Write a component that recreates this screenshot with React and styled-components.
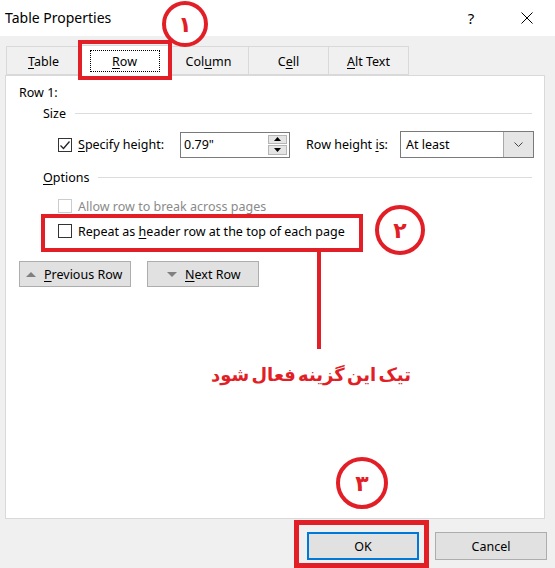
import React from "react";
import styled, { createGlobalStyle } from "styled-components";

const Global = createGlobalStyle`
  html, body { margin: 0; padding: 0; background: #f0f0f0; }
  body { font-family: "Segoe UI", "Noto Sans", "Open Sans", sans-serif; font-size: 12px; color: #000; }
  * { box-sizing: border-box; }
`;

const RED = "#e21f26";

const Window = styled.div`
  position: relative;
  width: 555px;
  height: 568px;
  display: flex;
  flex-direction: column;
  background: #f0f0f0;
  overflow: hidden;
`;

const TitleBar = styled.div`
  height: 36px;
  background: #fff;
  display: flex;
  align-items: center;
  padding-left: 5px;
  flex-shrink: 0;
`;

const Title = styled.div`
  font-size: 14px;
  flex: 1;
  padding-bottom: 2px;
`;

const TitleBtn = styled.div`
  width: 46px;
  height: 36px;
  display: flex;
  align-items: center;
  justify-content: center;
  font-size: 15px;
  margin-right: ${(p) => p.$mr || 0}px;
`;

const Main = styled.div`
  padding: 9px 10px 0 5px;
  display: flex;
  flex-direction: column;
`;

const TabStrip = styled.div`
  display: flex;
  align-items: flex-end;
  height: 30px;
  padding-left: 1px;
  position: relative;
  z-index: 1;
`;

const Tab = styled.div`
  width: ${(p) => p.$w}px;
  height: ${(p) => (p.$active ? 31 : 29)}px;
  border: 1px solid #d9d9d9;
  border-bottom: ${(p) => (p.$active ? "none" : "1px solid #d9d9d9")};
  margin-left: ${(p) => (p.$first ? 0 : -1)}px;
  background: ${(p) => (p.$active ? "#fff" : "#f0f0f0")};
  display: flex;
  align-items: center;
  justify-content: center;
  font-size: 12.5px;
  padding-top: ${(p) => (p.$active ? 0 : 2)}px;
  margin-bottom: ${(p) => (p.$active ? -1 : 0)}px;
`;

const FocusRect = styled.span`
  border: 1px dotted #000;
  width: 70px;
  height: 22px;
  display: flex;
  align-items: center;
  justify-content: center;
`;

const Panel = styled.div`
  height: 444px;
  background: #fff;
  border: 1px solid #d9d9d9;
  padding: 8px 0 0 13px;
  display: flex;
  flex-direction: column;
`;

const Label = styled.div`
  font-size: 12.5px;
  color: ${(p) => (p.$disabled ? "#8a8a8a" : "#000")};
  white-space: nowrap;
  margin-left: ${(p) => p.$ml || 0}px;
`;

const GroupHeader = styled.div`
  display: flex;
  align-items: center;
  gap: 9px;
  margin-left: 24px;
  margin-right: 12px;
  margin-top: ${(p) => p.$mt}px;
  font-size: 12.5px;
  &::after {
    content: "";
    flex: 1;
    height: 1px;
    background: #dcdcdc;
  }
`;

const Row = styled.div`
  display: flex;
  align-items: center;
  margin-left: 39px;
  margin-top: ${(p) => p.$mt}px;
  height: ${(p) => p.$h || 18}px;
`;

const Box = styled.span`
  width: 14px;
  height: 14px;
  border: 1px solid ${(p) => (p.$disabled ? "#cccccc" : "#333")};
  background: #fff;
  display: inline-flex;
  align-items: center;
  justify-content: center;
  margin-right: 6px;
  flex-shrink: 0;
`;

const Spin = styled.div`
  margin-left: 16px;
  width: 110px;
  height: 26px;
  border: 1px solid #7a7a7a;
  display: flex;
  align-items: center;
  padding-left: 3px;
  font-size: 12.5px;
`;

const SpinText = styled.div`
  flex: 1;
`;

const SpinBtns = styled.div`
  width: 19px;
  height: 20px;
  margin-right: 2px;
  display: flex;
  flex-direction: column;
  gap: 1px;
`;

const SpinBtn = styled.div`
  flex: 1;
  background: #e5e5e5;
  border: 1px solid #b5b5b5;
  display: flex;
  align-items: center;
  justify-content: center;
`;

const Select = styled.div`
  margin-left: 12px;
  width: 134px;
  height: 27px;
  border: 1px solid #7a7a7a;
  display: flex;
  align-items: center;
  font-size: 12.5px;
`;

const SelectText = styled.div`
  flex: 1;
  padding-left: 5px;
`;

const SelectBtn = styled.div`
  width: 30px;
  height: 100%;
  background: #e5e5e5;
  border-left: 1px solid #a8a8a8;
  display: flex;
  align-items: center;
  justify-content: center;
`;

const NavRow = styled.div`
  display: flex;
  gap: 16px;
  margin-top: 21px;
`;

const NavButton = styled.div`
  width: 112px;
  height: 26px;
  background: #e1e1e1;
  border: 1px solid #adadad;
  display: flex;
  align-items: center;
  padding-left: ${(p) => p.$pl}px;
  gap: 8px;
  font-size: 12.5px;
`;

const Footer = styled.div`
  display: flex;
  justify-content: flex-end;
  gap: 16px;
  padding: 13px 8px 0 0;
`;

const DlgButton = styled.div`
  width: 112px;
  height: 28px;
  background: #e1e1e1;
  border: ${(p) => (p.$default ? "2px solid #0078d7" : "1px solid #adadad")};
  display: flex;
  align-items: center;
  justify-content: center;
  font-size: 12.5px;
`;

/* annotation overlays */
const RedBox = styled.div`
  position: absolute;
  left: ${(p) => p.$x}px;
  top: ${(p) => p.$y}px;
  width: ${(p) => p.$w}px;
  height: ${(p) => p.$h}px;
  border: ${(p) => p.$t || 4}px solid ${RED};
  pointer-events: none;
  z-index: 5;
`;

const Circle = styled.div`
  position: absolute;
  left: ${(p) => p.$cx - p.$r}px;
  top: ${(p) => p.$cy - p.$r}px;
  width: ${(p) => p.$r * 2}px;
  height: ${(p) => p.$r * 2}px;
  border: 4px solid ${RED};
  border-radius: 50%;
  background: #fff;
  color: ${RED};
  display: flex;
  align-items: center;
  justify-content: center;
  font-family: "DejaVu Sans", sans-serif;
  font-weight: bold;
  font-size: ${(p) => p.$fs || 22}px;
  z-index: 5;
`;

const VLine = styled.div`
  position: absolute;
  left: 317px;
  top: 251px;
  width: 4px;
  height: 98px;
  background: ${RED};
  z-index: 5;
`;

const Note = styled.div`
  position: absolute;
  left: 160px;
  top: 364px;
  width: 302px;
  text-align: center;
  direction: rtl;
  white-space: nowrap;
  color: ${RED};
  font-family: "DejaVu Sans", sans-serif;
  font-weight: bold;
  font-size: 18px;
  word-spacing: -4px;
  z-index: 5;
`;

const U = styled.u`
  text-decoration-thickness: 1px;
  text-underline-offset: 2px;
`;

const Check = () => (
  <svg width="12" height="12" viewBox="0 0 12 12">
    <polyline points="1.5,6.5 4.5,9.5 10.5,2.5" fill="none" stroke="#222" strokeWidth="1.3" />
  </svg>
);

const Tri = ({ up, color = "#000", w = 7, h = 4 }) => (
  <svg width={w} height={h} viewBox={`0 0 ${w} ${h}`}>
    <polygon points={up ? `0,${h} ${w / 2},0 ${w},${h}` : `0,0 ${w},0 ${w / 2},${h}`} fill={color} />
  </svg>
);

export default function App() {
  return (
    <>
      <Global />
      <Window>
        <TitleBar>
          <Title>Table Properties</Title>
          <TitleBtn $mr={10}>?</TitleBtn>
          <TitleBtn $mr={5}>
            <svg width="12" height="12" viewBox="0 0 12 12">
              <path d="M0.5 0.5 L11.5 11.5 M11.5 0.5 L0.5 11.5" stroke="#000" strokeWidth="1" />
            </svg>
          </TitleBtn>
        </TitleBar>
        <Main>
          <TabStrip>
            <Tab $w={75} $first>
              <span><U>T</U>able</span>
            </Tab>
            <Tab $w={89} $active>
              <FocusRect><span><U>R</U>ow</span></FocusRect>
            </Tab>
            <Tab $w={81}>
              <span>Col<U>u</U>mn</span>
            </Tab>
            <Tab $w={81}>
              <span>C<U>e</U>ll</span>
            </Tab>
            <Tab $w={81}>
              <span><U>A</U>lt Text</span>
            </Tab>
          </TabStrip>
          <Panel>
            <Label>Row 1:</Label>
            <GroupHeader $mt={4}>Size</GroupHeader>
            <Row $mt={9} $h={27}>
              <Box><Check /></Box>
              <Label><U>S</U>pecify height:</Label>
              <Spin>
                <SpinText>0.79"</SpinText>
                <SpinBtns>
                  <SpinBtn><Tri up /></SpinBtn>
                  <SpinBtn><Tri /></SpinBtn>
                </SpinBtns>
              </Spin>
              <Label $ml={16}>Row height <U>i</U>s:</Label>
              <Select>
                <SelectText>At least</SelectText>
                <SelectBtn>
                  <svg width="9" height="5" viewBox="0 0 9 5">
                    <polyline points="0.5,0.5 4.5,4.5 8.5,0.5" fill="none" stroke="#444" strokeWidth="1" />
                  </svg>
                </SelectBtn>
              </Select>
            </Row>
            <GroupHeader $mt={11}><span><U>O</U>ptions</span></GroupHeader>
            <Row $mt={11}>
              <Box $disabled />
              <Label $disabled>Allow row to break across pages</Label>
            </Row>
            <Row $mt={7}>
              <Box />
              <Label>Repeat as <U>h</U>eader row at the top of each page</Label>
            </Row>
            <NavRow>
              <NavButton $pl={6}>
                <Tri up color="#808080" w={10} h={5} />
                <span><U>P</U>revious Row</span>
              </NavButton>
              <NavButton $pl={19}>
                <Tri color="#808080" w={10} h={5} />
                <span><U>N</U>ext Row</span>
              </NavButton>
            </NavRow>
          </Panel>
        </Main>
        <Footer>
          <DlgButton $default>OK</DlgButton>
          <DlgButton>Cancel</DlgButton>
        </Footer>

        <RedBox $x={78} $y={40} $w={94} $h={40} />
        <Circle $cx={185} $cy={24} $r={23}>۱</Circle>
        <RedBox $x={41} $y={214} $w={322} $h={38} />
        <Circle $cx={400} $cy={230} $r={25}>۲</Circle>
        <VLine />
        <Note>تیک این گزینه فعال شود</Note>
        <Circle $cx={362} $cy={483} $r={26}>۳</Circle>
        <RedBox $x={294} $y={520} $w={135} $h={48} $t={5} />
      </Window>
    </>
  );
}
